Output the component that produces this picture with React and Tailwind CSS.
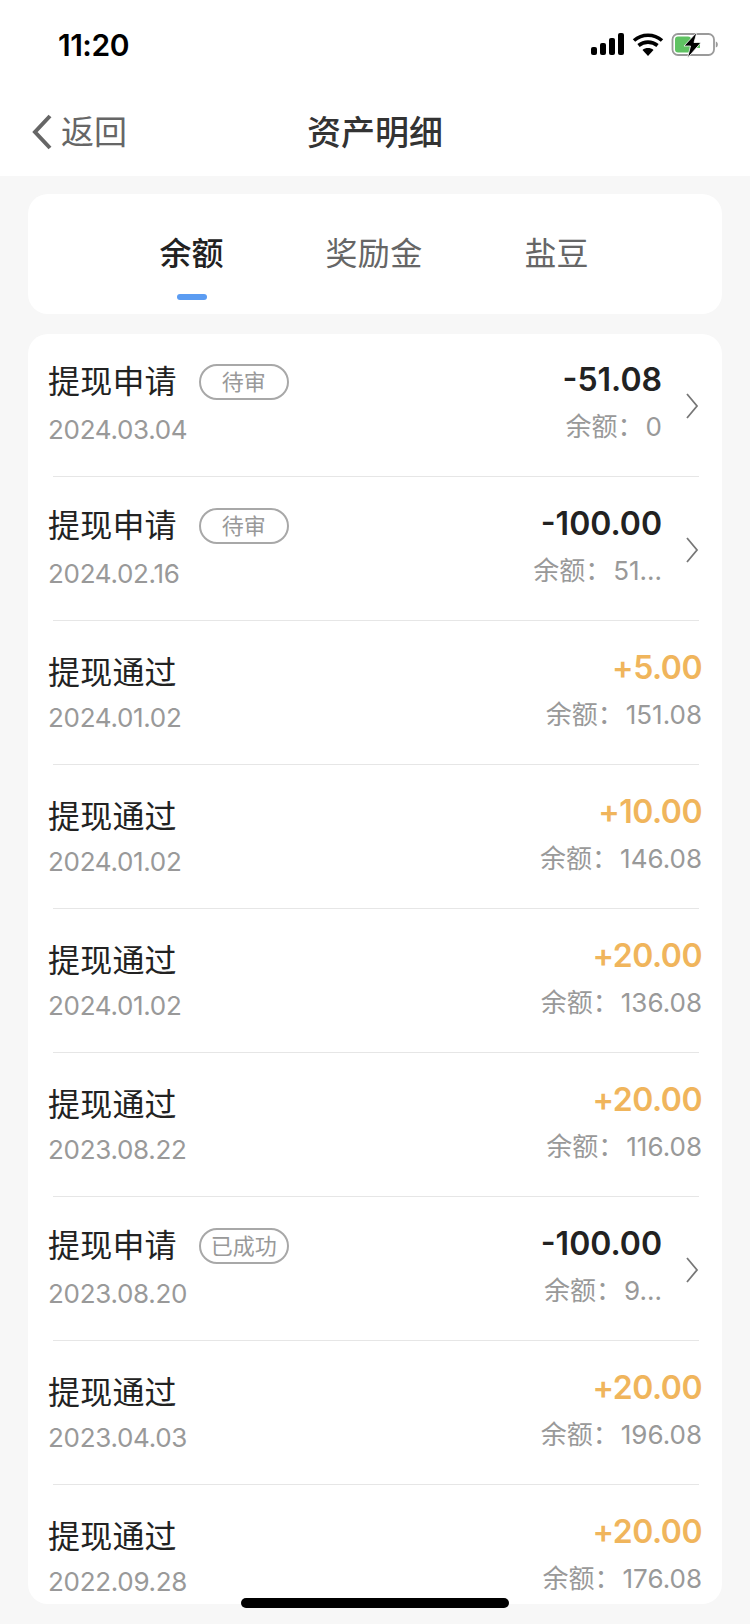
import React from 'react';

const rows = [
  { title: '提现申请', tag: '待审', date: '2024.03.04', amount: '-51.08', balance: '0', arrow: true },
  { title: '提现申请', tag: '待审', date: '2024.02.16', amount: '-100.00', balance: '51...', arrow: true },
  { title: '提现通过', date: '2024.01.02', amount: '+5.00', balance: '151.08' },
  { title: '提现通过', date: '2024.01.02', amount: '+10.00', balance: '146.08' },
  { title: '提现通过', date: '2024.01.02', amount: '+20.00', balance: '136.08' },
  { title: '提现通过', date: '2023.08.22', amount: '+20.00', balance: '116.08' },
  { title: '提现申请', tag: '已成功', date: '2023.08.20', amount: '-100.00', balance: '9...', arrow: true },
  { title: '提现通过', date: '2023.04.03', amount: '+20.00', balance: '196.08' },
  { title: '提现通过', date: '2022.09.28', amount: '+20.00', balance: '176.08' },
];

const StatusIcons = () => (
  <svg className="mt-[2px]" width="127" height="26" viewBox="0 0 127 26" fill="none">
    {/* signal */}
    <rect x="0" y="15" width="6" height="8" rx="2" fill="#000" />
    <rect x="9" y="11" width="6" height="12" rx="2" fill="#000" />
    <rect x="18" y="6" width="6" height="17" rx="2" fill="#000" />
    <rect x="27" y="1" width="6" height="22" rx="2" fill="#000" />
    {/* wifi */}
    <path d="M43 8.500c8-7 20-7 28 0M47.500 13.500c5.500-4.500 13.500-4.500 19 0" stroke="#000" strokeWidth="3.600" />
    <path d="M57 24l-5.500-6c3-2.600 8-2.600 11 0z" fill="#000" />
    {/* battery */}
    <rect x="81.500" y="2" width="41.500" height="21" rx="5.500" stroke="#9a9a9a" strokeWidth="1.800" />
    <path d="M124.800 9.500c1.500.5 2 1.500 2 3s-.5 2.500-2 3z" fill="#9a9a9a" />
    <rect x="84" y="4.500" width="16" height="16" rx="3" fill="#5fc262" />
    <rect x="106" y="10" width="3" height="6" fill="#5fc262" />
    <path d="M106 0L93 14h6.500L96.500 26 110 10.500h-7L106 0z" fill="#000" stroke="#fff" strokeWidth="0.800" />
  </svg>
);

const Row = ({ row, last }) => (
  <div className="relative h-[144px] flex">
    <div className="pl-[20px] pt-[26px] flex-1 min-w-0">
      <div className="flex items-center h-[44px]">
        <span className={`text-[32px] leading-[44px] tracking-[0.2px] text-[#222222] ${row.tag ? '' : 'mt-[5px]'}`}>{row.title}</span>
        {row.tag && (
          <span className="ml-[22px] w-[90px] h-[36px] rounded-full border-2 border-[#a8a8a8] flex items-center justify-center text-[22px] leading-none text-[#999999]">
            {row.tag}
          </span>
        )}
      </div>
      <div className="mt-[8px] text-[26px] leading-[36px] tracking-[-0.3px] text-[#999999]">{row.date}</div>
    </div>
    <div className={`pt-[24px] flex flex-col items-end ${row.arrow ? 'pr-[60px]' : 'pr-[20px]'}`}>
      <div className={`text-[32px] leading-[44px] font-semibold ${row.arrow ? 'text-[#222222]' : 'text-[#f0b55c] tracking-[-0.5px]'}`}>
        {row.amount}
      </div>
      <div className="mt-[7px] flex text-[26px] leading-[36px] text-[#999999]">
        <span>余额：</span>
        <span className="ml-[2px]">{row.balance}</span>
      </div>
    </div>
    {row.arrow && (
      <svg className="absolute right-[23px] top-[59px]" width="14" height="26" viewBox="0 0 14 26" fill="none">
        <path d="M2 1l10 12L2 25" stroke="#777777" strokeWidth="1.800" />
      </svg>
    )}
    {!last && <div className="absolute bottom-[1px] left-[25px] right-[23px] h-px bg-[#e6e6e6]" />}
  </div>
);

export default function App() {
  return (
    <div
      className="w-[750px] h-[1624px] overflow-hidden relative bg-[#f7f7f7]"
      style={{ fontFamily: 'Inter, "Noto Sans CJK SC", sans-serif' }}
    >
      {/* Header */}
      <div className="bg-white h-[176px]">
        <div className="h-[88px] pl-[58px] pr-[32px] flex items-center justify-between">
          <span className="mt-[2px] text-[30px] font-semibold tracking-[-0.5px] text-black">11:20</span>
          <StatusIcons />
        </div>
        <div className="relative h-[88px] flex items-center justify-center">
          <div className="absolute left-[32px] top-[24px] flex items-center">
            <svg width="20" height="36" viewBox="0 0 20 36" fill="none">
              <path d="M18 2L3 18l15 16" stroke="#666666" strokeWidth="4" />
            </svg>
            <span className="ml-[9px] text-[33px] leading-[40px] text-[#666666]">返回</span>
          </div>
          <span className="text-[34px] font-medium text-[#333333]">资产明细</span>
        </div>
      </div>

      {/* Tabs */}
      <div className="mx-[28px] mt-[18px] h-[120px] bg-white rounded-[20px] relative flex justify-center gap-[101px] pt-[38px] pr-[2px]">
        <div className="flex flex-col items-center">
          <span className="text-[32px] leading-[44px] font-medium text-[#222222]">余额</span>
          <span className="mt-[18px] w-[30px] h-[6px] rounded-full bg-[#5b9cf2]" />
        </div>
        <span className="ml-[1px] text-[32px] leading-[44px] tracking-[0.3px] text-[#666666]">奖励金</span>
        <span className="ml-[1px] text-[32px] leading-[44px] text-[#666666]">盐豆</span>
      </div>

      {/* List */}
      <div className="mx-[28px] mt-[20px] h-[1270px] bg-white rounded-[20px] overflow-hidden">
        {rows.map((row, i) => (
          <Row key={i} row={row} last={i === rows.length - 1} />
        ))}
      </div>

      {/* Home indicator */}
      <div className="absolute bottom-[16px] left-[241px] w-[268px] h-[10px] rounded-full bg-black" />
    </div>
  );
}
